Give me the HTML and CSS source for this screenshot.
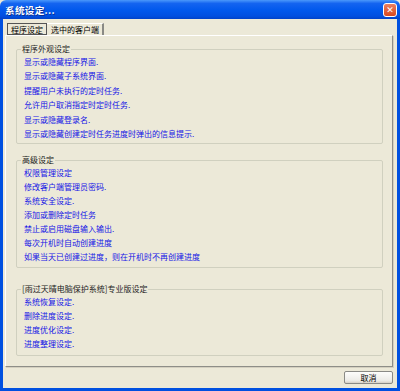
FILE: index.html
```html
<!DOCTYPE html>
<html lang="zh-CN">
<head>
    <meta charset="UTF-8">
    <title>系统设定...</title>
    <link rel="stylesheet" href="styles.css">
</head>
<body>
    <div class="window">
        <div class="titlebar">
            <span class="title">系统设定...</span>
            <span class="close-btn">&#x2715;</span>
        </div>

        <div class="frame">
            <div class="tabs">
                <div class="tab active"><span>程序设定</span></div>
                <div class="tab">选中的客户端</div>
            </div>

            <div class="panel">
                <fieldset class="group group-look">
                    <legend>程序外观设定</legend>
                    <div class="item">显示或隐藏程序界面.</div>
                    <div class="item">显示或隐藏子系统界面.</div>
                    <div class="item">提醒用户未执行的定时任务.</div>
                    <div class="item">允许用户取消指定时定时任务.</div>
                    <div class="item">显示或隐藏登录名.</div>
                    <div class="item">显示或隐藏创建定时任务进度时弹出的信息提示.</div>
                </fieldset>

                <fieldset class="group group-adv">
                    <legend>高级设定</legend>
                    <div class="item">权限管理设定</div>
                    <div class="item">修改客户端管理员密码.</div>
                    <div class="item">系统安全设定.</div>
                    <div class="item">添加或删除定时任务</div>
                    <div class="item">禁止或启用磁盘输入输出.</div>
                    <div class="item">每次开机时自动创建进度</div>
                    <div class="item">如果当天已创建过进度，则在开机时不再创建进度</div>
                </fieldset>

                <fieldset class="group group-pro">
                    <legend>[雨过天晴电脑保护系统]专业版设定</legend>
                    <div class="item">系统恢复设定.</div>
                    <div class="item">删除进度设定.</div>
                    <div class="item">进度优化设定.</div>
                    <div class="item">进度整理设定.</div>
                </fieldset>
            </div>

            <div class="footer">
                <button class="cancel-btn">取消</button>
            </div>
        </div>
    </div>
</body>
</html>
```

FILE: styles.css
```css
body {
    margin: 0;
    font-family: "Noto Sans CJK SC", "DejaVu Sans", sans-serif;
    font-size: 8px;
    color: #000;
    background: #ece9d8;
}

.window {
    width: 400px;
    height: 391px;
    display: flex;
    flex-direction: column;
}

/* 标题栏 */
.titlebar {
    height: 19px;
    flex: none;
    display: flex;
    align-items: center;
    justify-content: space-between;
    padding: 0 3px 0 5px;
    background: linear-gradient(to bottom, #4a98fb 0%, #1464f0 18%, #0058ec 55%, #004fe0 85%, #0042c8 100%);
    border-radius: 6px 6px 0 0;
}

.title {
    color: #fff;
    font-weight: bold;
    font-size: 9.6px;
    letter-spacing: 0.3px;
    text-shadow: 1px 1px 0 #0b2f8f;
}

.close-btn {
    width: 12px;
    height: 12px;
    display: flex;
    align-items: center;
    justify-content: center;
    color: #fff;
    font-size: 9px;
    font-weight: bold;
    font-family: "DejaVu Sans", sans-serif;
    background: linear-gradient(to bottom, #ec8060, #d8481f);
    border: 1px solid #fff;
    border-radius: 3px;
}

/* 窗口主体 */
.frame {
    flex: 1;
    display: flex;
    flex-direction: column;
    background: #ece9d8;
    border: 3px solid #0050e0;
    border-top: none;
}

.tabs {
    display: flex;
    margin: 4px 0 0 4px;
    height: 12px;
}

.tab {
    height: 12px;
    line-height: 12px;
    padding: 0 3px 0 4px;
    border-top: 1px solid #fff;
    border-right: 2px solid #8a8a85;
    box-sizing: border-box;
}

.tab.active {
    width: 40px;
    padding: 0;
    border: 1px solid #555;
    text-align: center;
}

.panel {
    height: 332px;
    box-sizing: border-box;
    margin: 0 4px 0 2px;
    padding: 8px 9px 0 10px;
    border: 1px solid #fff;
    border-right-color: #8e8e88;
    border-bottom-color: #8e8e88;
    box-shadow: 1px 1px 0 #d4d0c0;
}

/* 分组框 */
.group {
    margin: 0;
    padding: 1px 6px 2px 7px;
    border: 1px solid #d0d0bf;
    border-radius: 2px;
}

.group legend {
    margin-left: -3px;
    padding: 0 1px;
    line-height: 10px;
    color: #222;
}

.item {
    line-height: 14px;
    color: #1414e6;
    white-space: nowrap;
}

.group-look .item {
    line-height: 14.4px;
}

.group-adv {
    margin-top: 11px;
    padding-bottom: 3px;
}

.group-pro {
    margin-top: 16px;
    padding-bottom: 4px;
}

/* 底部按钮 */
.footer {
    display: flex;
    justify-content: flex-end;
    margin: 4px 4px 0 0;
}

.cancel-btn {
    width: 49px;
    height: 13px;
    padding: 0;
    font-family: inherit;
    font-size: 8px;
    line-height: 11px;
    color: #000;
    background: linear-gradient(to bottom, #fdfdfb, #ecebe6 80%, #d6d0c5);
    border: 1px solid #8a8a85;
    border-radius: 2px;
}
```
